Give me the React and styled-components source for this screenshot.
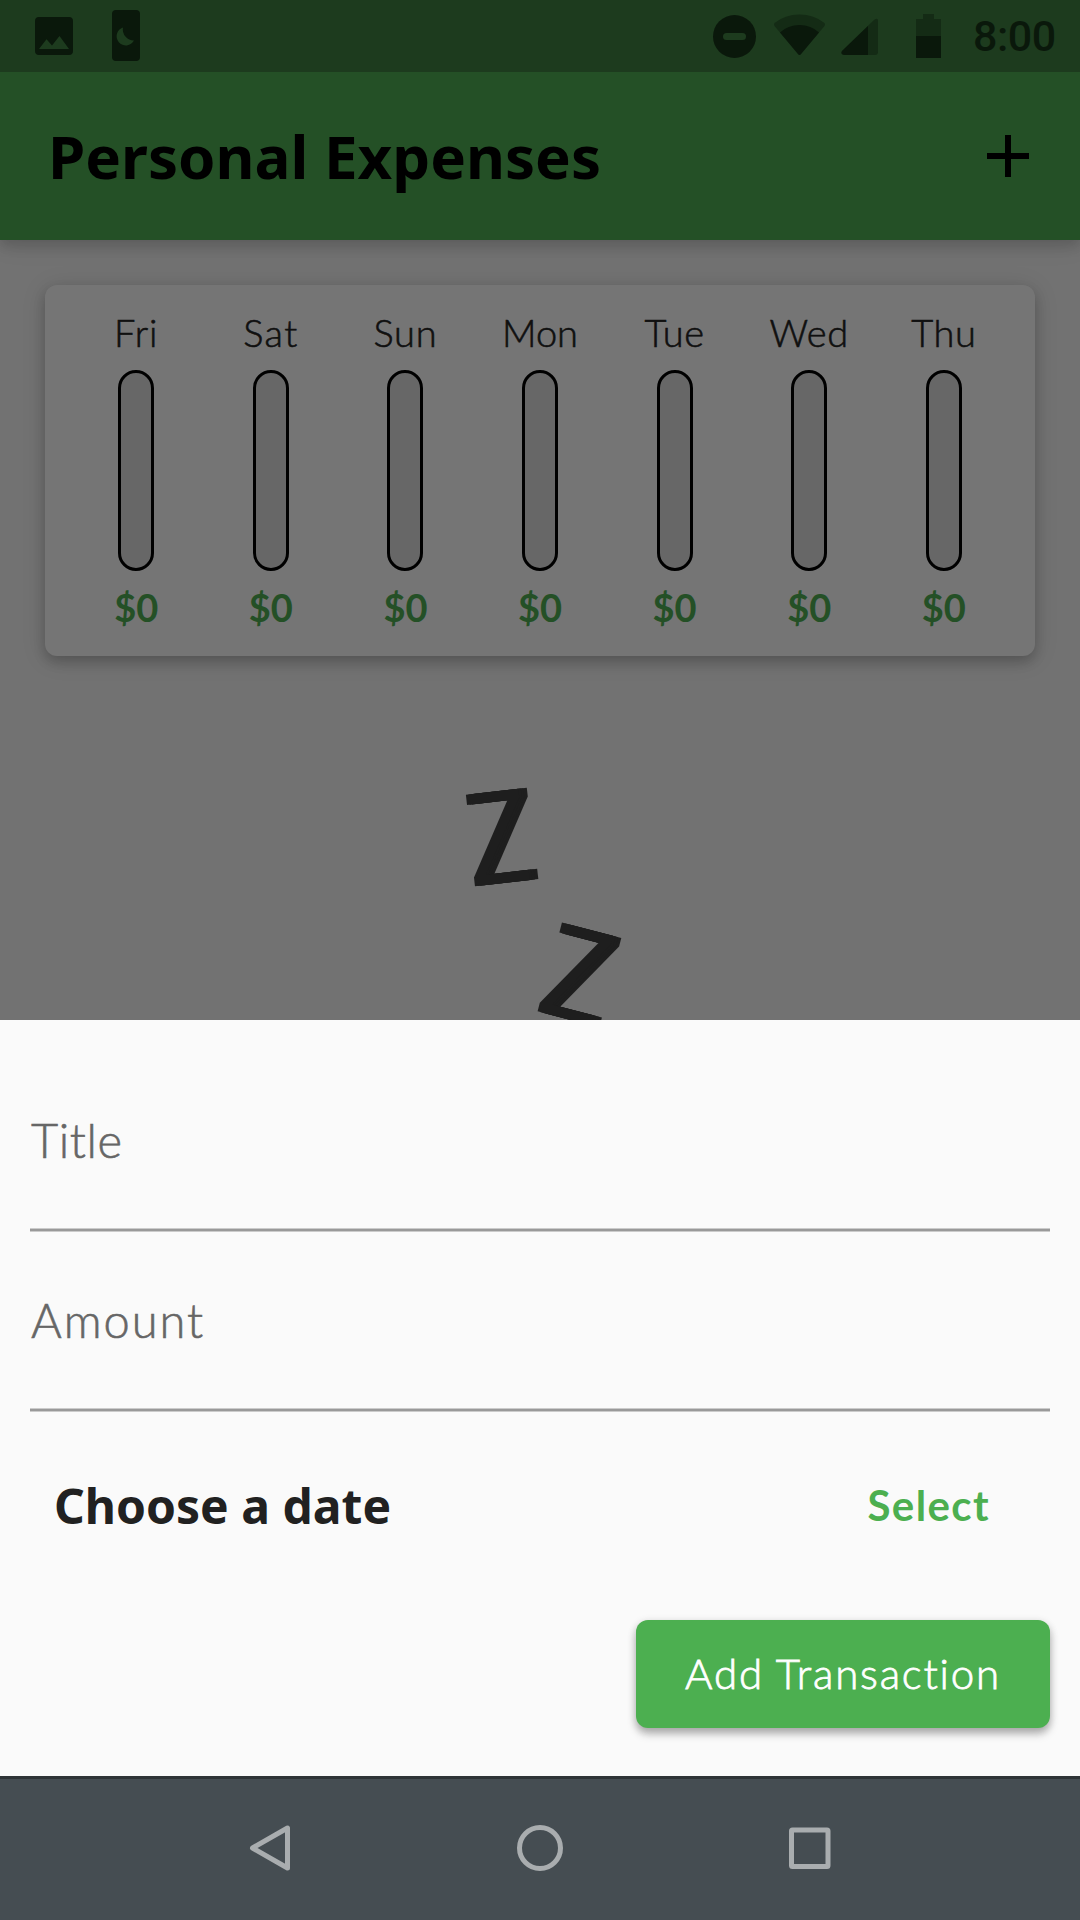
import React from "react";
import styled, { createGlobalStyle } from "styled-components";

const GlobalStyle = createGlobalStyle`
  html, body { margin: 0; padding: 0; background: #727272; }
  * { box-sizing: border-box; }
  button { font: inherit; border: 0; padding: 0; background: none; }
`;

const body = `"Lato", "Open Sans", sans-serif`;
const heading = `"Noto Sans", "Open Sans", sans-serif`;

const Screen = styled.div`
  width: 1080px;
  height: 1920px;
  display: flex;
  flex-direction: column;
  overflow: hidden;
  background: #727272;
  font-family: ${body};
`;

const StatusBar = styled.header`
  height: 72px;
  flex: none;
  display: flex;
  justify-content: space-between;
  padding: 0 25px 0 35px;
  background: #1d3b1e;
  color: #0a180b;
`;

const StatusGroup = styled.div`
  display: flex;
  align-items: center;
`;

const Glyph = styled.svg`
  display: block;
  flex: none;
  margin-left: ${(p) => p.$gap || 0}px;
`;

const Clock = styled.span`
  width: 82px;
  margin-left: 32px;
  font: 500 43px/75px Roboto, sans-serif;
  letter-spacing: -0.5px;
  white-space: nowrap;
`;

const AppBar = styled.div`
  position: relative;
  height: 168px;
  flex: none;
  display: flex;
  align-items: center;
  justify-content: space-between;
  padding: 0 51px 0 48px;
  background: #245026;
  box-shadow: 0 6px 12px rgba(0, 0, 0, 0.14), 0 3px 26px rgba(0, 0, 0, 0.09);
  clip-path: inset(0 0 -60px 0);
`;

const AppTitle = styled.h1`
  margin: 0;
  font: 700 60px/168px ${heading};
  color: #000;
  white-space: nowrap;
`;

const Content = styled.main`
  height: 780px;
  flex: none;
  overflow: hidden;
  padding: 45px 45px 0;
`;

const ChartCard = styled.section`
  height: 371px;
  display: flex;
  padding: 17px 24px 0;
  border-radius: 12px;
  background: #757575;
  box-shadow: 0 6px 12px rgba(0, 0, 0, 0.18), 0 3px 24px rgba(0, 0, 0, 0.13);
`;

const Day = styled.div`
  flex: 1 1 0;
  display: flex;
  flex-direction: column;
  align-items: center;
`;

const DayName = styled.span`
  font-weight: 300;
  font-size: 38px;
  line-height: 60px;
  letter-spacing: ${(p) => p.$track}px;
  color: #101010;
  -webkit-text-stroke: 0.6px #101010;
`;

const Track = styled.div`
  width: 36px;
  height: 201px;
  margin: 8px 0 6px;
  border: 3px solid #000;
  border-radius: 18px;
  background: #676767;
`;

const Spent = styled.span`
  font-weight: 700;
  font-size: 38px;
  line-height: 60px;
  color: #245026;
`;

const Sleeping = styled.div`
  position: relative;
  height: 360px;
`;

const Zed = styled.span`
  position: absolute;
  left: ${(p) => p.$x}px;
  top: ${(p) => p.$y}px;
  width: 80px;
  margin: -80px 0 0 -40px;
  text-align: center;
  font: 400 129px/160px ${heading};
  color: #1e1e1e;
  text-shadow: 3px 0 #1e1e1e, 6px 0 #1e1e1e, 10px 0 #1e1e1e;
  transform: rotate(${(p) => p.$angle}deg) scaleX(0.865) translateX(-5px);
`;

const Sheet = styled.section`
  position: relative;
  height: 756px;
  flex: none;
  padding: 32px 30px 0;
  background: #fafafa;
`;

const Field = styled.label`
  display: block;
  height: 180px;
  padding: 58px 0 0 1px;
  background: linear-gradient(#cbcbcb 25%, #999 25%, #999 75%, #cbcbcb 75%) bottom / 100% 4px no-repeat;
  color: #666;
  font-weight: 300;
  font-size: 47px;
  line-height: 60px;
  letter-spacing: ${(p) => p.$track}px;
  -webkit-text-stroke: 0.6px #666;
`;

const DateRow = styled.div`
  height: 180px;
  display: flex;
  align-items: center;
  justify-content: space-between;
  margin-top: 4px;
  padding: 0 60px 0 24px;
`;

const DateLabel = styled.span`
  font: 700 48px/60px ${heading};
  color: #212121;
`;

const SelectButton = styled.button`
  && { font-weight: 700; font-size: 42px; line-height: 60px; padding-bottom: 2px; }
  letter-spacing: 1.4px;
  color: #4caf50;
`;

const Actions = styled.div`
  display: flex;
  justify-content: flex-end;
  margin-top: 24px;
`;

const AddButton = styled.button`
  width: 414px;
  height: 108px;
  border-radius: 12px;
  background: #4caf50;
  color: #fff;
  && { font-weight: 300; font-size: 42px; padding-bottom: 2px; }
  letter-spacing: 1.8px;
  -webkit-text-stroke: 0.8px #fff;
  white-space: nowrap;
  box-shadow: 0 6px 8px rgba(0, 0, 0, 0.26), 0 2px 8px rgba(0, 0, 0, 0.14);
`;

const NavBar = styled.nav`
  height: 144px;
  flex: none;
  display: flex;
  justify-content: center;
  gap: 220px;
  border-top: 3px solid #2e3437;
  background: #454d52;
`;

const NavGlyph = styled.svg`
  display: block;
  width: 50px;
  height: 141px;
  fill: none;
  stroke: #a9adaf;
  stroke-width: 5;
  stroke-linejoin: round;
`;

const days = [
  ["Fri", 1],
  ["Sat", 1.4],
  ["Sun", 0.8],
  ["Mon", 0],
  ["Tue", 0.6],
  ["Wed", 0.6],
  ["Thu", 0.6],
];

export default function App() {
  return (
    <Screen>
      <GlobalStyle />
      <StatusBar>
        <StatusGroup>
          <Glyph width="39" height="72" viewBox="35 0 39 72">
            <path fill="currentColor" fillRule="evenodd" d="M39 17H69Q73 17 73 21V51Q73 55 69 55H39Q35 55 35 51V21Q35 17 39 17ZM39 49H69L59.500 36L52 45.500L46.500 39.300Z" />
          </Glyph>
          <Glyph $gap={38} width="28" height="72" viewBox="112 0 28 72">
            <rect x="112" y="10" width="28" height="51" rx="4" fill="currentColor" />
            <path fill="#1d3b1e" d="M123 27.500A9.200 9.200 0 1 0 134 40.500A11 11 0 0 1 123 27.500Z" />
          </Glyph>
        </StatusGroup>
        <StatusGroup>
          <Glyph width="43" height="72" viewBox="713 0 43 72">
            <circle cx="734.500" cy="36.500" r="21.500" fill="currentColor" />
            <rect x="723" y="33" width="23" height="7" rx="3.500" fill="#1d3b1e" />
          </Glyph>
          <Glyph $gap={17} width="53" height="72" viewBox="773 0 53 72">
            <path fill="#142b15" d="M774.500 23Q785 14.500 799.500 14.500T824.500 23Q825.500 24.500 824.500 26L801 54Q799.500 56 798 54L774.500 26Q773.500 24.500 774.500 23Z" />
            <path fill="currentColor" d="M780 32.500Q788 25 799.500 25T819 32.500L801 54Q799.500 56 798 54Z" />
          </Glyph>
          <Glyph $gap={15} width="37" height="72" viewBox="841 0 37 72">
            <path fill="#142b15" d="M874 20Q878 17 878 21V52Q878 55 875 55H845Q840 55 842 51Z" />
            <path fill="currentColor" d="M868 26V55H845Q840 54.500 842 51Z" />
          </Glyph>
          <Glyph $gap={38} width="25" height="72" viewBox="916 0 25 72">
            <path fill="#142b15" d="M923 14H934V19H941V36H916V19H923Z" />
            <path fill="currentColor" d="M916 36H941V58H916Z" />
          </Glyph>
          <Clock>8:00</Clock>
        </StatusGroup>
      </StatusBar>
      <AppBar>
        <AppTitle>Personal Expenses</AppTitle>
        <Glyph width="42" height="42" viewBox="0 0 42 42">
          <path fill="#000" d="M18 0H24V18H42V24H24V42H18V24H0V18H18Z" />
        </Glyph>
      </AppBar>
      <Content>
        <ChartCard>
          {days.map(([name, track]) => (
            <Day key={name}>
              <DayName $track={track}>{name}</DayName>
              <Track />
              <Spent>$0</Spent>
            </Day>
          ))}
        </ChartCard>
        <Sleeping aria-hidden="true">
          <Zed $x={456} $y={177} $angle={-6.5}>Z</Zed>
          <Zed $x={535.5} $y={315} $angle={14.5}>Z</Zed>
        </Sleeping>
      </Content>
      <Sheet>
        <Field $track={0.6}>Title</Field>
        <Field $track={2}>Amount</Field>
        <DateRow>
          <DateLabel>Choose a date</DateLabel>
          <SelectButton>Select</SelectButton>
        </DateRow>
        <Actions>
          <AddButton>Add Transaction</AddButton>
        </Actions>
      </Sheet>
      <NavBar>
        <NavGlyph viewBox="245 1779 50 141">
          <path d="M252.500 1848L287.500 1828V1868Z" />
        </NavGlyph>
        <NavGlyph viewBox="515 1779 50 141">
          <circle cx="540" cy="1848" r="20.500" />
        </NavGlyph>
        <NavGlyph viewBox="785 1779 50 141">
          <rect x="791.500" y="1830" width="36.500" height="36.500" rx="1" />
        </NavGlyph>
      </NavBar>
    </Screen>
  );
}
